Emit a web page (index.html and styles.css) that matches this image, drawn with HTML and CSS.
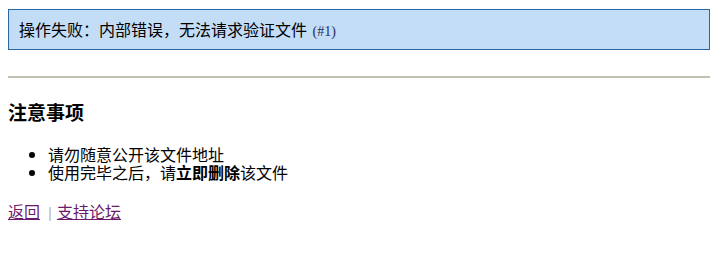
FILE: index.html
```html
<!DOCTYPE html>
<html lang="zh-CN">
<head>
<meta charset="utf-8">
<title>操作失败</title>
<link rel="stylesheet" href="styles.css">
</head>
<body>
<div class="page">
  <div class="notice">操作失败：内部错误，无法请求验证文件 <span class="code">(#1)</span></div>
  <hr class="rule">
  <h3 class="title">注意事项</h3>
  <ul class="tips">
    <li>请勿随意公开该文件地址</li>
    <li>使用完毕之后，请<b>立即删除</b>该文件</li>
  </ul>
  <p class="links"><a class="link" href="#">返回</a><span class="sep">|</span><a class="link" href="#">支持论坛</a></p>
</div>
</body>
</html>
```
FILE: styles.css
```css
html, body {
  margin: 0;
  padding: 0;
  background: #ffffff;
}
body {
  font-family: "Noto Sans CJK SC", "Liberation Serif", serif;
  font-size: 16px;
  color: #000000;
}
.page {
  padding: 9px 14px 8px 8px;
}
.notice {
  background: #c4ddf6;
  border: 1px solid #2a67a8;
  padding: 9px 10px;
  height: 21px;
  line-height: 21px;
  font-size: 16px;
}
.code {
  font-family: "Liberation Serif", serif;
  font-size: 14px;
  line-height: 1;
  color: #2b2b55;
  margin-left: 2px;
}
.rule {
  margin: 26px 0 0 0;
  border: 0;
  border-top: 2px solid #c2c2b4;
  height: 0;
}
.title {
  margin: 23px 0 0 0;
  font-size: 19px;
  font-weight: bold;
  line-height: 22px;
}
.tips {
  margin: 22px 0 0 0;
  padding-left: 40px;
  line-height: 18px;
}
.links {
  margin: 19px 0 0 0;
  line-height: 22px;
}
.link {
  color: #6b1a6b;
}
.sep {
  color: #b8b8b8;
  font-family: "Liberation Sans", sans-serif;
  font-size: 15px;
  margin: 0 5px 0 8px;
}
```
